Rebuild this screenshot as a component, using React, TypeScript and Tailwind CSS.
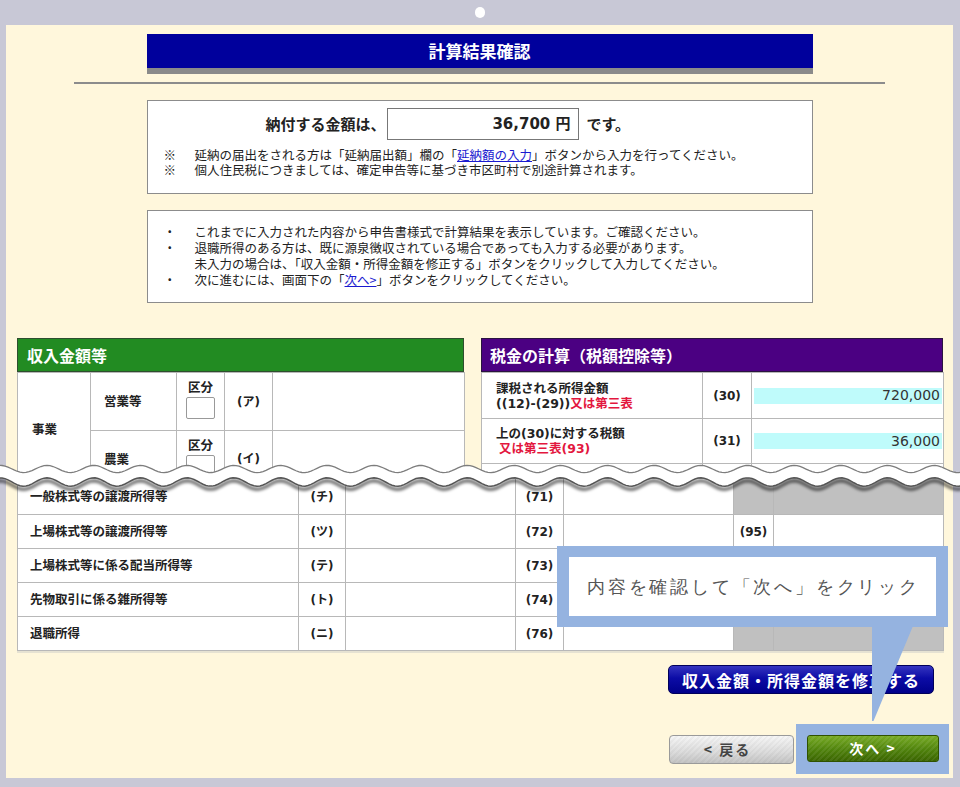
import React from 'react';

const JP = "font-['Noto_Sans_CJK_JP',sans-serif]";
const MIX = "font-['DejaVu_Sans','Noto_Sans_CJK_JP',sans-serif]";

function wave(y0: number, amp: number) {
  const pts: string[] = [];
  for (let x = -4; x <= 964; x += 3) {
    const y = y0 + amp * Math.sin(((x - 12) / 46.7) * Math.PI * 2);
    pts.push(`${x},${y.toFixed(2)}`);
  }
  return pts;
}

const lowerRows = [
  { label: '一般株式等の譲渡所得等', a: '(チ)', b: '(71)', c: '', gray: true },
  { label: '上場株式等の譲渡所得等', a: '(ツ)', b: '(72)', c: '(95)', gray: false },
  { label: '上場株式等に係る配当所得等', a: '(テ)', b: '(73)', c: '', gray: true },
  { label: '先物取引に係る雑所得等', a: '(ト)', b: '(74)', c: '', gray: true },
  { label: '退職所得', a: '(ニ)', b: '(76)', c: '', gray: true },
];

function WaveBreak() {
  const top = wave(17, 3.6);
  const bottom = wave(30, 4.2);
  const shadow = wave(33, 4.2);
  const band = `M${top.join(' L')} L${[...bottom].reverse().join(' L')} Z`;
  return (
    <svg className="absolute left-0 top-[452px]" width="960" height="48" viewBox="0 0 960 48">
      <defs>
        <filter id="wblur" x="-5%" y="-50%" width="110%" height="200%">
          <feGaussianBlur stdDeviation="1.8" />
        </filter>
      </defs>
      <path d={`M${shadow.join(' L')}`} fill="none" stroke="rgba(0,0,0,0.55)" strokeWidth="3.5" filter="url(#wblur)" />
      <path d={band} fill="#ffffff" />
      <path d={`M${top.join(' L')}`} fill="none" stroke="#7d7d7d" strokeWidth="1.3" />
      <path d={`M${bottom.join(' L')}`} fill="none" stroke="#555555" strokeWidth="1.5" />
    </svg>
  );
}

export default function App() {
  return (
    <div className="relative h-[787px] w-[960px] overflow-hidden bg-[#c8c8d6] pt-[25px] pr-[7px] pb-[9px] pl-[6px]">
      <div className="absolute left-[475px] top-[7px] h-[11px] w-[10px] rounded-full bg-white" />

      <div className={`flex h-full flex-col bg-[#fff7dc] text-[#222] ${JP}`}>
        {/* Title */}
        <div className="mx-auto mt-[9px] flex h-[34px] w-[666px] items-center justify-center bg-[#00009c] text-[17px] font-bold text-white shadow-[0_6px_0_#8a8a8a]">
          計算結果確認
        </div>
        <div className="mx-auto mt-[14px] h-[2px] w-[811px] bg-[#8c8c8c]" />

        {/* Amount box */}
        <div className="mx-auto mt-[16px] h-[94px] w-[666px] border border-[#8c8c8c] bg-white pt-[7px]">
          <div className="flex h-[32px] items-center pl-[118px] text-[15px] font-bold">
            <span className="w-[121px]">納付する金額は、</span>
            <div className={`flex h-[32px] w-[192px] items-center justify-end border border-[#777] pr-[7px] ${MIX}`}>
              36,700 円
            </div>
            <span className="ml-[8px]">です。</span>
          </div>
          <div className="mt-[7px] pl-[16px] text-[12.5px] leading-[15px]">
            <div className="flex">
              <span className="w-[31px]">※</span>
              <span>
                延納の届出をされる方は「延納届出額」欄の「
                <span className="text-[#1a1ad0] underline">延納額の入力</span>」ボタンから入力を行ってください。
              </span>
            </div>
            <div className="flex">
              <span className="w-[31px]">※</span>
              <span>個人住民税につきましては、確定申告等に基づき市区町村で別途計算されます。</span>
            </div>
          </div>
        </div>

        {/* Info box */}
        <div className="mx-auto mt-[16px] h-[93px] w-[666px] border border-[#8c8c8c] bg-white pt-[13px] pl-[16px] text-[12.5px] leading-[16px]">
          <div className="flex">
            <span className="w-[31px]">・</span>
            <span>これまでに入力された内容から申告書様式で計算結果を表示しています。ご確認ください。</span>
          </div>
          <div className="flex">
            <span className="w-[31px]">・</span>
            <span>退職所得のある方は、既に源泉徴収されている場合であっても入力する必要があります。</span>
          </div>
          <div className="flex">
            <span className="w-[31px]" />
            <span>未入力の場合は、「収入金額・所得金額を修正する」ボタンをクリックして入力してください。</span>
          </div>
          <div className="flex">
            <span className="w-[31px]">・</span>
            <span>
              次に進むには、画面下の「<span className="text-[#1a1ad0] underline">次へ&gt;</span>」ボタンをクリックしてください。
            </span>
          </div>
        </div>

        {/* Upper tables */}
        <div className="mt-[35px] flex h-[138px] gap-[17px] overflow-hidden pl-[11px]">
          <div className="w-[447px]">
            <div className="flex h-[34px] items-center border border-[#2e4e2e] bg-[#228b22] px-[9px] text-[16px] font-bold text-white">
              収入金額等
            </div>
            <table className="w-[447px] table-fixed border-collapse bg-white text-[12.5px] font-bold">
              <colgroup>
                <col className="w-[73px]" />
                <col className="w-[86px]" />
                <col className="w-[48px]" />
                <col className="w-[48px]" />
                <col className="w-[192px]" />
              </colgroup>
              <tbody>
                <tr className="h-[58px]">
                  <td rowSpan={2} className="border border-[#b8b8b8] pl-[14px]">事業</td>
                  <td className="border border-[#b8b8b8] pl-[13px]">営業等</td>
                  <td className="border border-[#b8b8b8] text-center align-top pt-[6px]">
                    <div className="leading-[15px]">区分</div>
                    <div className="mx-auto mt-[3px] h-[22px] w-[29px] rounded-[2px] border border-[#999]" />
                  </td>
                  <td className={`border border-[#b8b8b8] text-center text-[12px] ${MIX}`}>(ア)</td>
                  <td className="border border-[#b8b8b8]" />
                </tr>
                <tr className="h-[56px]">
                  <td className="border border-[#b8b8b8] pl-[13px] pt-[2px]">農業</td>
                  <td className="border border-[#b8b8b8] text-center align-top pt-[6px]">
                    <div className="leading-[15px]">区分</div>
                    <div className="mx-auto mt-[3px] h-[22px] w-[29px] rounded-[2px] border border-[#999]" />
                  </td>
                  <td className={`border border-[#b8b8b8] text-center text-[12px] ${MIX}`}>(イ)</td>
                  <td className="border border-[#b8b8b8]" />
                </tr>
              </tbody>
            </table>
          </div>

          <div className="w-[462px]">
            <div className="flex h-[34px] items-center border border-[#2a1440] bg-[#4b0082] px-[8px] text-[16px] font-bold text-white">
              税金の計算（税額控除等）
            </div>
            <table className="w-[462px] table-fixed border-collapse bg-white text-[12.5px] font-bold">
              <colgroup>
                <col className="w-[221px]" />
                <col className="w-[49px]" />
                <col className="w-[192px]" />
              </colgroup>
              <tbody>
                <tr className="h-[46px]">
                  <td className={`border border-[#b8b8b8] pl-[14px] leading-[15px] ${MIX}`}>
                    <div>課税される所得金額</div>
                    <div>
                      ((12)-(29))<span className="text-[#e3173e]">又は第三表</span>
                    </div>
                  </td>
                  <td className={`border border-[#b8b8b8] text-center text-[12px] ${MIX}`}>(30)</td>
                  <td className="border border-[#b8b8b8] pl-[2px] pr-px">
                    <div className={`flex h-[16px] items-center justify-end bg-[#bffbfb] pr-[2px] text-[14px] font-normal text-[#333] ${MIX}`}>
                      720,000
                    </div>
                  </td>
                </tr>
                <tr className="h-[45px]">
                  <td className={`border border-[#b8b8b8] pl-[14px] leading-[15px] ${MIX}`}>
                    <div>上の(30)に対する税額</div>
                    <div className="pl-[3px] text-[#e3173e]">又は第三表(93)</div>
                  </td>
                  <td className={`border border-[#b8b8b8] text-center text-[12px] ${MIX}`}>(31)</td>
                  <td className="border border-[#b8b8b8] pl-[2px] pr-px">
                    <div className={`flex h-[16px] items-center justify-end bg-[#bffbfb] pr-[2px] text-[14px] font-normal text-[#333] ${MIX}`}>
                      36,000
                    </div>
                  </td>
                </tr>
                <tr className="h-[45px]">
                  <td className="border border-[#b8b8b8]" />
                  <td className="border border-[#b8b8b8]" />
                  <td className="border border-[#b8b8b8]" />
                </tr>
              </tbody>
            </table>
          </div>
        </div>

        {/* Lower table */}
        <table className="mt-[2px] ml-[11px] w-[926px] table-fixed border-collapse bg-white text-[12.5px] font-bold shadow-[0_2px_0_#e6e2d2]">
          <colgroup>
            <col className="w-[281px]" />
            <col className="w-[47px]" />
            <col className="w-[170px]" />
            <col className="w-[48px]" />
            <col className="w-[170px]" />
            <col className="w-[40px]" />
            <col className="w-[170px]" />
          </colgroup>
          <tbody>
            {lowerRows.map((r, i) => (
              <tr key={r.b} className={i === 0 ? 'h-[36px]' : 'h-[34px]'}>
                <td className="border border-[#b8b8b8] pl-[12px]">{r.label}</td>
                <td className={`border border-[#b8b8b8] text-center text-[12px] ${MIX}`}>{r.a}</td>
                <td className="border border-[#b8b8b8]" />
                <td className={`border border-[#b8b8b8] text-center text-[12px] ${MIX}`}>{r.b}</td>
                <td className="border border-[#b8b8b8]" />
                <td className={`border border-[#b8b8b8] text-center text-[12px] ${MIX} ${r.gray ? 'bg-[#c0c0c0]' : ''}`}>{r.c}</td>
                <td className={`border border-[#b8b8b8] ${r.gray ? 'bg-[#c0c0c0]' : ''}`} />
              </tr>
            ))}
          </tbody>
        </table>

        {/* Buttons */}
        <div className="mt-[14px] flex justify-end pr-[19px]">
          <button className="flex h-[29px] w-[266px] items-center justify-center rounded-[5px] border border-[#00005a] bg-[image:linear-gradient(#3535c0,#0c0ca6_45%,#00008a)] text-[16px] font-bold tracking-[1px] text-white">
            収入金額・所得金額を修正する
          </button>
        </div>

        <div className="mt-[30px] flex items-center justify-end gap-[2px] pr-[4px]">
          <button className="flex h-[29px] w-[125px] items-center justify-center rounded-[4px] border border-[#9a9a9a] bg-[image:repeating-linear-gradient(135deg,rgba(0,0,0,0.03)_0px,rgba(0,0,0,0.03)_2px,transparent_2px,transparent_4px),linear-gradient(#f6f6f6,#dcdcdc_60%,#c4c4c4)] pr-[8px] text-[14px] font-bold tracking-[2px] text-[#444]">
            &lt;&nbsp;戻る
          </button>
          <div className="bg-[#95b3e0] pt-[11px] pr-[10px] pb-[12px] pl-[11px]">
            <button className="flex h-[27px] w-[132px] items-center justify-center rounded-[3px] border border-[#2f5200] bg-[image:repeating-linear-gradient(135deg,rgba(255,255,255,0.07)_0px,rgba(255,255,255,0.07)_2px,transparent_2px,transparent_4px),linear-gradient(#76aa24,#4f820c_55%,#3a6400)] text-[14px] font-bold tracking-[2px] text-white">
              次へ&nbsp;&gt;
            </button>
          </div>
        </div>
      </div>

      <WaveBreak />

      {/* Callout */}
      <div className="absolute left-[557px] top-[546px] h-[81px] w-[391px] bg-[#95b3e0] px-[12px] py-[11px]">
        <div className="flex h-full items-center bg-white pl-[18px] text-[18px] tracking-[2.8px] text-[#555]">
          内容を確認して「次へ」をクリック
        </div>
      </div>
      <svg className="absolute left-[860px] top-[626px]" width="60" height="96" viewBox="0 0 60 96">
        <polygon points="12,0 53,0 13.5,95 12,95" fill="#95b3e0" />
      </svg>
    </div>
  );
}
